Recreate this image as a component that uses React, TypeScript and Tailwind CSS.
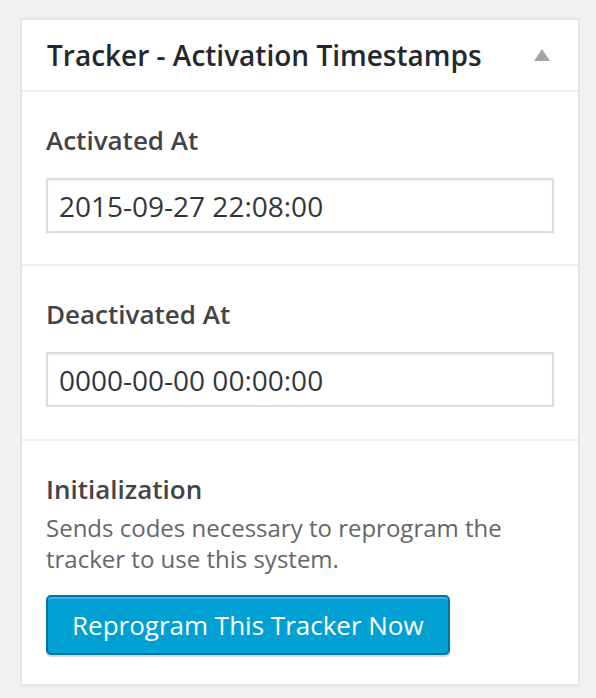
export default function App() {
  return (
    <div className="min-h-screen bg-[#f1f1f1] pt-[18px] pl-[20px]" style={{ fontFamily: '"Open Sans", "Noto Sans", sans-serif' }}>
      {/* Postbox */}
      <div className="w-[560px] border-2 border-[#e5e5e5] bg-white shadow-[0_1px_1px_rgba(0,0,0,0.04)]">
        {/* Header */}
        <div className="flex h-[72px] items-center justify-between border-b-2 border-[#eeeeee] pl-[25px] pr-[28px]">
          <h2 className="text-[28px] font-semibold text-[#23282d]">Tracker - Activation Timestamps</h2>
          <svg width="16" height="12" viewBox="0 0 16 12">
            <polygon points="8,0 16,12 0,12" fill="#a0a5aa" />
          </svg>
        </div>

        {/* Activated */}
        <div className="border-b-2 border-[#eeeeee] px-[24px] pt-[30px] pb-[31px]">
          <label className="block text-[26px] font-semibold leading-[36px] text-[#444444]">Activated At</label>
          <input
            readOnly
            value="2015-09-27 22:08:00"
            className="mt-[20px] block h-[55px] w-full border-2 border-[#dddddd] px-[11px] text-[28px] text-[#32373c] shadow-[inset_0_1px_2px_rgba(0,0,0,0.07)] outline-none"
          />
        </div>

        {/* Deactivated */}
        <div className="border-b-2 border-[#eeeeee] px-[24px] pt-[30px] pb-[32px]">
          <label className="block text-[26px] font-semibold leading-[36px] text-[#444444]">Deactivated At</label>
          <input
            readOnly
            value="0000-00-00 00:00:00"
            className="mt-[20px] block h-[55px] w-full border-2 border-[#dddddd] px-[11px] text-[28px] text-[#32373c] shadow-[inset_0_1px_2px_rgba(0,0,0,0.07)] outline-none"
          />
        </div>

        {/* Initialization */}
        <div className="px-[24px] pt-[30px] pb-[29px]">
          <h4 className="text-[26px] font-semibold leading-[36px] text-[#444444]">Initialization</h4>
          <p className="mt-[5px] text-[24px] leading-[31px] text-[#666666]">
            Sends codes necessary to reprogram the tracker to use this system.
          </p>
          <button className="mt-[21px] h-[60px] rounded-[5px] border-2 border-[#0073aa] bg-[#00a0d2] px-[24px] text-[26px] text-white shadow-[inset_0_2px_0_rgba(120,200,230,0.5),0_2px_0_rgba(0,0,0,0.15)]">
            Reprogram This Tracker Now
          </button>
        </div>
      </div>
    </div>
  );
}
